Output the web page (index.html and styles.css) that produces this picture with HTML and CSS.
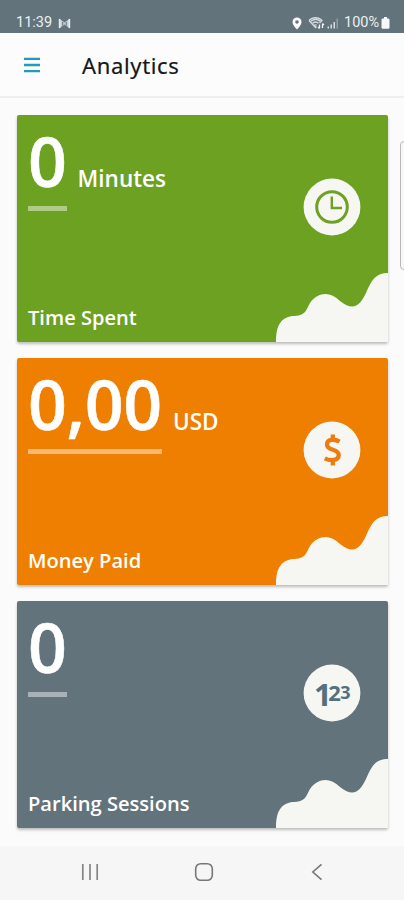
FILE: index.html
```html
<!DOCTYPE html>
<html lang="en">
<head>
<meta charset="utf-8">
<title>Analytics</title>
<link rel="stylesheet" href="styles.css">
</head>
<body>
<div class="screen">
  <div class="status">
    <span class="time">11:39</span>
    <svg class="mail" width="13" height="11" viewBox="0 0 13 11"><path d="M1 .5 6.5 4.5 12 .5V10.5L6.5 6.5 1 10.5Z" fill="#c4ced3"/><path d="M1.600 1v9M11.400 1v9" stroke="#e6ecef" stroke-width="1.600"/><path d="M4.700 4v3.500M8.300 4v3.500" stroke="#62737b" stroke-width="1"/></svg>
    <svg class="pin" width="10" height="13" viewBox="0 0 10 13"><path fill-rule="evenodd" d="M5 .5a4.500 4.500 0 0 0-4.500 4.500C.5 8 5 12.500 5 12.500S9.500 8 9.500 5A4.500 4.500 0 0 0 5 .5ZM5 3.200a1.800 1.800 0 1 1 0 3.600 1.800 1.800 0 0 1 0-3.600Z" fill="#fff"/></svg>
    <svg class="wifi" width="17" height="14" viewBox="0 0 17 14" fill="none" stroke="#d5dde1" stroke-width="1.300"><path d="M1 4.500C4.500 .6 10.500 .6 14 4.500L11.500 7M1 4.500 7.500 11.500l1-1M3 5.300c2.800-2.500 6.500-2.500 9.200 0M4.700 7.300c2-1.700 4-1.700 5.800 0M6.300 9.300q1.200-1 2.400 0"/><path d="M11.500 12.500V8.500M10 11l1.500 1.500M14.500 7.500v4.500M14.500 7.500 16 9" stroke="#eef2f4"/></svg>
    <svg class="signal" width="12" height="11" viewBox="0 0 12 11"><path d="M.5 8.500h1.500V10.500H.5zM3.500 6.500H5v4H3.500zM6.500 4H8v6.500H6.500z" fill="#d5dde1"/><path d="M9.500 .5H11v10H9.500z" fill="#8f9da4"/></svg>
    <span class="percent">100%</span>
    <svg class="battery" width="9" height="12" viewBox="0 0 9 12"><path d="M3 0h3v1.500h1.200q1.300 0 1.300 1.300v7.700q0 1.300-1.300 1.300H1.800Q.5 11.800 .5 10.500V2.800q0-1.300 1.300-1.300H3z" fill="#f4f8fa"/></svg>
  </div>
  <header class="bar">
    <svg class="menu" width="16" height="16" viewBox="0 0 16 16"><path d="M0 1.800h16M0 8h16M0 14.200h16" stroke="#2499be" stroke-width="2.300"/></svg>
    <h1>Analytics</h1>
  </header>
  <main class="cards">
    <section class="card green">
      <div class="figure"><span class="value">0</span><span class="unit">Minutes</span></div>
      <div class="label">Time Spent</div>
      <svg class="badge" viewBox="0 0 58 58"><circle cx="29" cy="29" r="28.400" fill="#f6f7f2"/><circle cx="29" cy="29" r="15.300" fill="none" stroke="#6da122" stroke-width="3"/><path d="M28.800 18.500V30H39" fill="none" stroke="#6da122" stroke-width="2.400"/></svg>
      <svg class="cloud" viewBox="0 0 112 69"><path d="M0 69C0 52 5 45 16 43C30 43 30 37 34 30C42 19 54 18 64 28C78 39 84 32 90 20C96 6 100 0 112 0V69Z" fill="#f6f7f2"/></svg>
    </section>
    <section class="card orange">
      <div class="figure"><span class="value">0,00</span><span class="unit">USD</span></div>
      <div class="label">Money Paid</div>
      <svg class="badge" viewBox="0 0 58 58"><circle cx="29" cy="29" r="28.400" fill="#f6f7f2"/><path d="M36.600 20.600C31 17.500 24 18.300 24 23.500C24 30.500 35.700 27 35.700 34C35.700 39.700 27.500 40.300 21.800 37.300M29.800 13.500V19.500M29.800 38.500V44.500" fill="none" stroke="#ed7c10" stroke-width="4.300"/></svg>
      <svg class="cloud" viewBox="0 0 112 69"><path d="M0 69C0 52 5 45 16 43C30 43 30 37 34 30C42 19 54 18 64 28C78 39 84 32 90 20C96 6 100 0 112 0V69Z" fill="#f6f7f2"/></svg>
    </section>
    <section class="card slate">
      <div class="figure"><span class="value">0</span></div>
      <div class="label">Parking Sessions</div>
      <svg class="badge" viewBox="0 0 58 58"><circle cx="29" cy="29" r="28.400" fill="#f6f7f2"/><text class="digits"><tspan x="11" y="41.500" font-size="31">1</tspan><tspan x="25.300" y="36.500" font-size="22">2</tspan><tspan x="37.300" y="35" font-size="18">3</tspan></text></svg>
      <svg class="cloud" viewBox="0 0 112 69"><path d="M0 69C0 52 5 45 16 43C30 43 30 37 34 30C42 19 54 18 64 28C78 39 84 32 90 20C96 6 100 0 112 0V69Z" fill="#f6f7f2"/></svg>
    </section>
  </main>
  <nav class="nav">
    <svg width="18" height="18" viewBox="0 0 18 18"><path d="M1.800 1v16M9 1v16M16.200 1v16" stroke="#858585" stroke-width="1.700"/></svg>
    <svg width="20" height="20" viewBox="0 0 20 20"><rect x="1.700" y="1.700" width="16.600" height="16.600" rx="5" fill="none" stroke="#777" stroke-width="1.600"/></svg>
    <svg width="18" height="18" viewBox="0 0 18 18"><path d="M13.500 1.300 4.800 9l8.700 7.700" fill="none" stroke="#777" stroke-width="1.600"/></svg>
  </nav>
  <div class="edge"></div>
</div>
</body>
</html>
```
FILE: styles.css
```css
* { box-sizing: border-box; }
body { margin: 0; }
svg { display: block; flex: none; }
.screen {
  position: relative;
  display: flex;
  flex-direction: column;
  width: 404px;
  height: 900px;
  overflow: hidden;
  background: #fbfbfc;
  font-family: "Open Sans", "Noto Sans", sans-serif;
}
.status {
  display: flex;
  align-items: center;
  height: 33px;
  padding: 13px 14px 0 16px;
  background: #62737b;
  color: #eaf0f3;
  font: 14.500px/20px Roboto, sans-serif;
}
.time { width: 37px; }
.mail { margin-left: 5px; }
.pin { margin-left: auto; }
.wifi { margin-left: 6px; }
.signal { margin: 0 5px 0 2px; }
.percent { width: 37px; }
.bar {
  display: flex;
  align-items: center;
  height: 65px;
  padding-left: 24px;
  border-bottom: 2px solid #eeeeef;
  background: #fcfcfd;
}
.bar h1 {
  margin: 0 0 0 42px;
  color: #17171a;
  font: 400 22px/30px "Noto Sans", sans-serif;
  letter-spacing: .650px;
  -webkit-text-stroke: .200px #17171a;
}
.cards {
  display: flex;
  flex: 1;
  flex-direction: column;
  gap: 15.750px;
  padding: 17px 16px 0 17px;
}
.card {
  position: relative;
  display: flex;
  flex-direction: column;
  justify-content: space-between;
  height: 227px;
  padding: 12px 11px 9px;
  border-radius: 2px;
  box-shadow: 0 2px 3px rgba(0, 0, 0, .25);
  color: #fff;
}
.green { background: #6da122; }
.orange { background: #ef7f00; }
.slate { background: #62737b; }
.figure { display: flex; align-items: baseline; gap: 11px; }
.value {
  height: 84px;
  border-bottom: 5px solid rgba(255, 255, 255, .45);
  font-size: 68px;
  font-weight: 600;
  letter-spacing: -.300px;
  line-height: 68px;
  -webkit-text-stroke: .500px #fff;
}
.unit { font-size: 22.500px; font-weight: 600; line-height: 30px; }
.label { font-size: 20.100px; font-weight: 600; line-height: 30px; }
.badge {
  position: absolute;
  top: 63px;
  right: 27px;
  width: 58px;
  height: 58px;
}
.digits { fill: #53707c; font-family: "Open Sans", sans-serif; font-weight: 700; }
.cloud { position: absolute; right: 0; bottom: 0; width: 112px; height: 69px; }
.nav {
  display: flex;
  align-items: center;
  justify-content: space-between;
  height: 54px;
  padding: 0 78px 2px 81px;
  background: #f6f6f6;
}
.edge {
  position: absolute;
  top: 141px;
  right: -6px;
  width: 10px;
  height: 129px;
  border: 1px solid #b9b9bb;
  border-radius: 4px;
  background: #f7f7f8;
}
```
